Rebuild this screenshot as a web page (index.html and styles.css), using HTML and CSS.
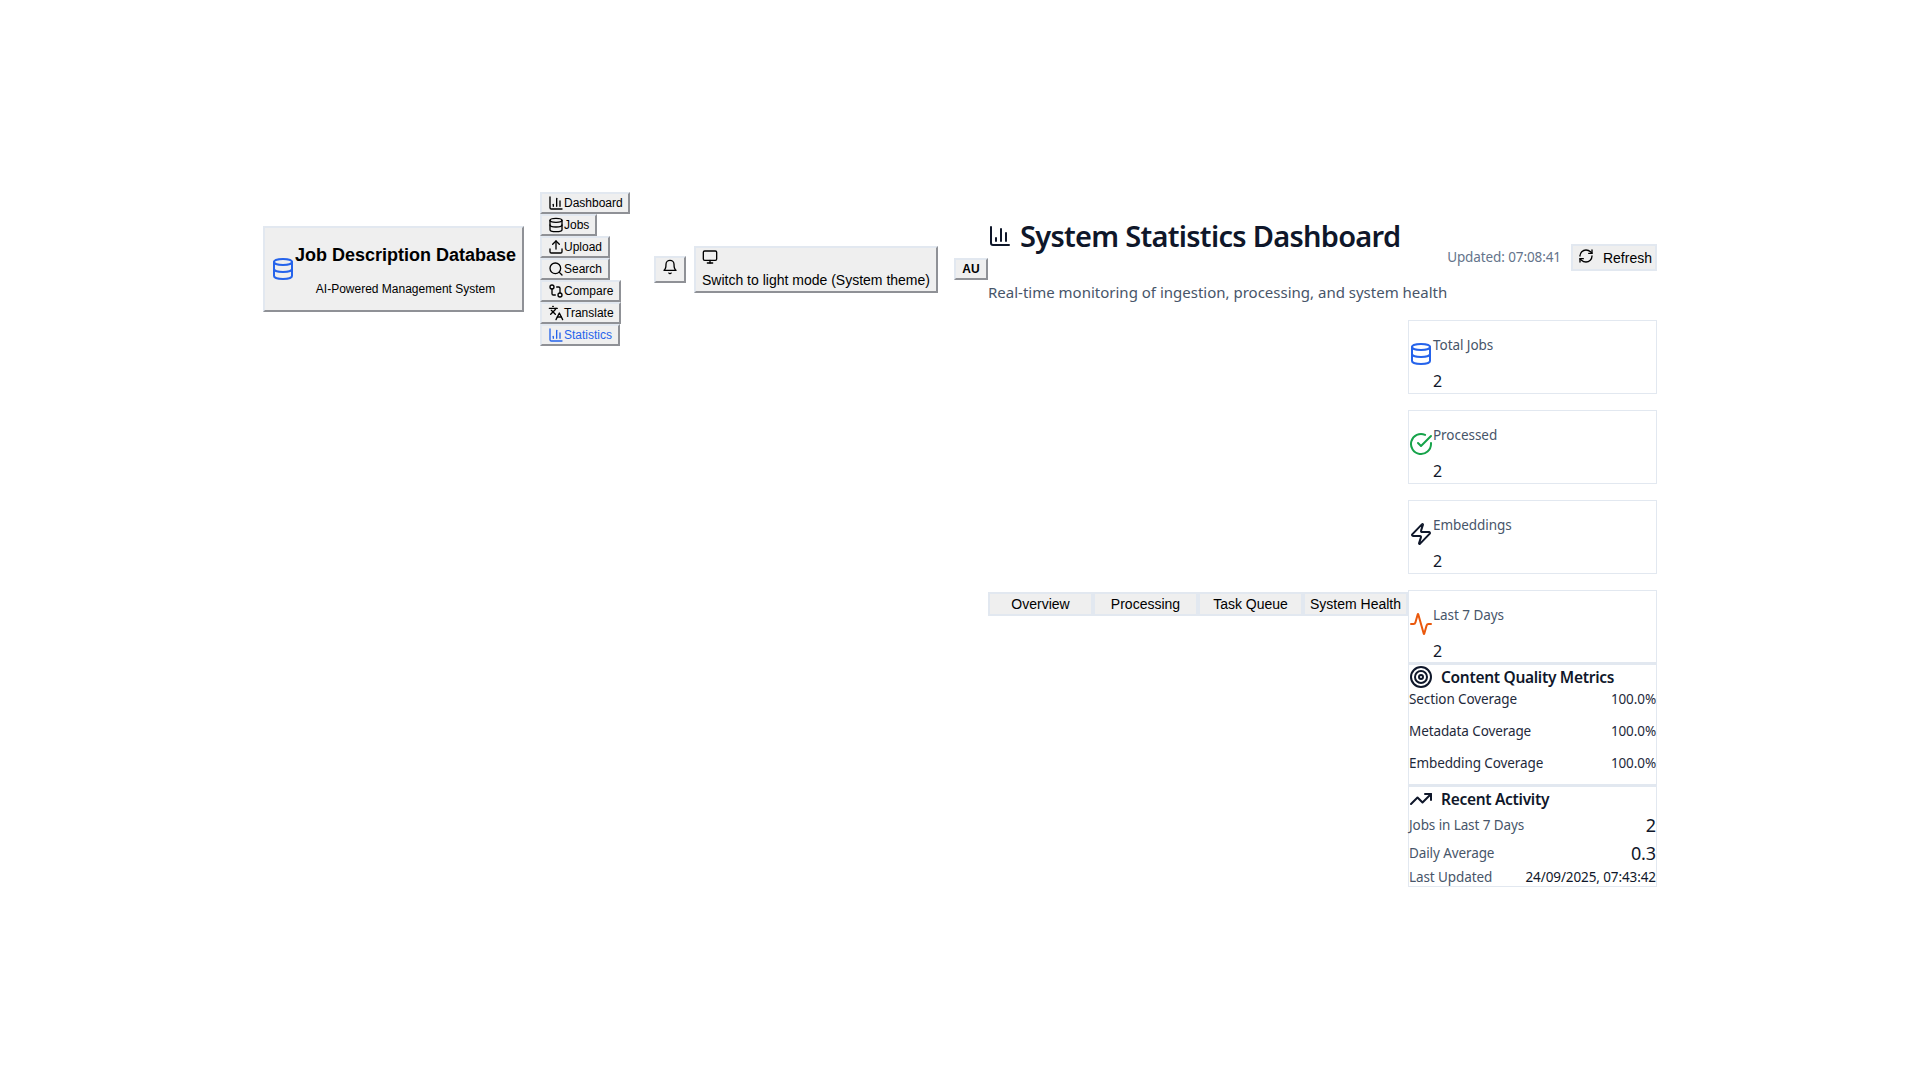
FILE: index.html

```html
<!DOCTYPE html>
<html lang="en">
<head>
    <meta charset="UTF-8">
    <title>System Statistics Dashboard</title>
    <link rel="stylesheet" href="styles.css">
</head>
<body>

<svg class="sprite" xmlns="http://www.w3.org/2000/svg">
    <symbol id="i-chart" viewBox="0 0 24 24"><path d="M3 3v16a2 2 0 0 0 2 2h16"/><path d="M18 17V9"/><path d="M13 17V5"/><path d="M8 17v-3"/></symbol>
    <symbol id="i-db" viewBox="0 0 24 24"><ellipse cx="12" cy="5" rx="9" ry="3"/><path d="M3 5V19A9 3 0 0 0 21 19V5"/><path d="M3 12A9 3 0 0 0 21 12"/></symbol>
    <symbol id="i-upload" viewBox="0 0 24 24"><path d="M21 15v4a2 2 0 0 1-2 2H5a2 2 0 0 1-2-2v-4"/><path d="M17 8l-5-5-5 5"/><path d="M12 3v12"/></symbol>
    <symbol id="i-search" viewBox="0 0 24 24"><circle cx="11" cy="11" r="8"/><path d="m21 21-4.3-4.3"/></symbol>
    <symbol id="i-compare" viewBox="0 0 24 24"><circle cx="18" cy="18" r="3"/><circle cx="6" cy="6" r="3"/><path d="M13 6h3a2 2 0 0 1 2 2v7"/><path d="M11 18H8a2 2 0 0 1-2-2V9"/></symbol>
    <symbol id="i-lang" viewBox="0 0 24 24"><path d="m5 8 6 6"/><path d="m4 14 6-6 2-3"/><path d="M2 5h12"/><path d="M7 2h1"/><path d="m22 22-5-10-5 10"/><path d="M14 18h6"/></symbol>
    <symbol id="i-bell" viewBox="0 0 24 24"><path d="M6 8a6 6 0 0 1 12 0c0 7 3 9 3 9H3s3-2 3-9"/><path d="M10.3 21a1.94 1.94 0 0 0 3.4 0"/></symbol>
    <symbol id="i-monitor" viewBox="0 0 24 24"><rect x="2" y="3" width="20" height="14" rx="2"/><path d="M8 21h8"/><path d="M12 17v4"/></symbol>
    <symbol id="i-refresh" viewBox="0 0 24 24"><path d="M3 12a9 9 0 0 1 9-9 9.75 9.75 0 0 1 6.74 2.74L21 8"/><path d="M21 3v5h-5"/><path d="M21 12a9 9 0 0 1-9 9 9.75 9.75 0 0 1-6.74-2.74L3 16"/><path d="M8 16H3v5"/></symbol>
    <symbol id="i-check" viewBox="0 0 24 24"><path d="M22 11.08V12a10 10 0 1 1-5.93-9.14"/><path d="M22 4 12 14.01l-3-3"/></symbol>
    <symbol id="i-zap" viewBox="0 0 24 24"><path d="M4 14a1 1 0 0 1-.78-1.63l9.9-10.2a.5.5 0 0 1 .86.46l-1.92 6.02A1 1 0 0 0 13 10h7a1 1 0 0 1 .78 1.63l-9.9 10.2a.5.5 0 0 1-.86-.46l1.92-6.02A1 1 0 0 0 11 14z"/></symbol>
    <symbol id="i-activity" viewBox="0 0 24 24"><path d="M22 12h-2.48a2 2 0 0 0-1.93 1.46l-2.35 8.36a.25.25 0 0 1-.48 0L9.24 2.18a.25.25 0 0 0-.48 0l-2.35 8.36A2 2 0 0 1 4.49 12H2"/></symbol>
    <symbol id="i-target" viewBox="0 0 24 24"><circle cx="12" cy="12" r="10"/><circle cx="12" cy="12" r="6"/><circle cx="12" cy="12" r="2"/></symbol>
    <symbol id="i-trend" viewBox="0 0 24 24"><path d="M22 7l-8.5 8.5-5-5L2 17"/><path d="M16 7h6v6"/></symbol>
</svg>

<div class="page">
    <header class="topbar">
        <button class="logo">
            <svg class="icon icon-24 blue"><use href="#i-db"/></svg>
            <span class="logo-text">
                <span class="logo-title">Job Description Database</span>
                <span class="logo-sub">AI-Powered Management System</span>
            </span>
        </button>

        <nav class="nav">
            <button class="nav-btn"><svg class="icon icon-16"><use href="#i-chart"/></svg>Dashboard</button>
            <button class="nav-btn"><svg class="icon icon-16"><use href="#i-db"/></svg>Jobs</button>
            <button class="nav-btn"><svg class="icon icon-16"><use href="#i-upload"/></svg>Upload</button>
            <button class="nav-btn"><svg class="icon icon-16"><use href="#i-search"/></svg>Search</button>
            <button class="nav-btn"><svg class="icon icon-16"><use href="#i-compare"/></svg>Compare</button>
            <button class="nav-btn"><svg class="icon icon-16"><use href="#i-lang"/></svg>Translate</button>
            <button class="nav-btn active"><svg class="icon icon-16"><use href="#i-chart"/></svg>Statistics</button>
        </nav>

        <button class="bell-btn"><svg class="icon icon-16"><use href="#i-bell"/></svg></button>
        <button class="theme-btn">
            <svg class="icon icon-16"><use href="#i-monitor"/></svg>
            <span>Switch to light mode (System theme)</span>
        </button>
        <button class="user-btn">AU</button>
    </header>

    <main class="main">
        <div class="main-head">
            <div class="head-text">
                <h1><svg class="icon icon-24"><use href="#i-chart"/></svg>System Statistics Dashboard</h1>
                <p class="subtitle">Real-time monitoring of ingestion, processing, and system health</p>
            </div>
            <div class="head-actions">
                <span class="updated">Updated: 07:08:41</span>
                <button class="refresh-btn"><svg class="icon icon-16"><use href="#i-refresh"/></svg>Refresh</button>
            </div>
        </div>

        <div class="content">
            <div class="tabs">
                <button class="tab">Overview</button>
                <button class="tab">Processing</button>
                <button class="tab">Task Queue</button>
                <button class="tab">System Health</button>
            </div>

            <div class="side">
                <div class="stat-card">
                    <svg class="icon icon-24 blue"><use href="#i-db"/></svg>
                    <div><div class="stat-label">Total Jobs</div><div class="stat-value">2</div></div>
                </div>
                <div class="stat-card">
                    <svg class="icon icon-24 green"><use href="#i-check"/></svg>
                    <div><div class="stat-label">Processed</div><div class="stat-value">2</div></div>
                </div>
                <div class="stat-card">
                    <svg class="icon icon-24"><use href="#i-zap"/></svg>
                    <div><div class="stat-label">Embeddings</div><div class="stat-value">2</div></div>
                </div>
                <div class="stat-card last">
                    <svg class="icon icon-24 orange"><use href="#i-activity"/></svg>
                    <div><div class="stat-label">Last 7 Days</div><div class="stat-value">2</div></div>
                </div>

                <section class="panel quality">
                    <h3><svg class="icon icon-24"><use href="#i-target"/></svg>Content Quality Metrics</h3>
                    <div class="q-row"><span>Section Coverage</span><span>100.0%</span></div>
                    <div class="q-row"><span>Metadata Coverage</span><span>100.0%</span></div>
                    <div class="q-row"><span>Embedding Coverage</span><span>100.0%</span></div>
                </section>

                <section class="panel activity">
                    <h3><svg class="icon icon-24"><use href="#i-trend"/></svg>Recent Activity</h3>
                    <div class="a-row"><span>Jobs in Last 7 Days</span><span class="big">2</span></div>
                    <div class="a-row"><span>Daily Average</span><span class="big">0.3</span></div>
                    <div class="a-row updated-row"><span>Last Updated</span><span class="date">24/09/2025, 07:43:42</span></div>
                </section>
            </div>
        </div>
    </main>
</div>

</body>
</html>
```

FILE: styles.css

```css
body {
    margin: 0;
    background: #fff;
    color: #0f172a;
    font-family: "Noto Sans", "Open Sans", sans-serif;
}
.sprite {
    display: none;
}
button {
    font-family: "Liberation Sans", Arial, sans-serif;
    color: #000;
    background: #efefef;
    border: 2px solid;
    border-color: #e2e8f0 #8f9196 #8f9196 #e2e8f0;
    padding: 0;
    margin: 0;
}
.icon {
    fill: none;
    stroke: currentColor;
    stroke-width: 2;
    stroke-linecap: round;
    stroke-linejoin: round;
    flex-shrink: 0;
}
.icon-16 { width: 16px; height: 16px; }
.icon-24 { width: 24px; height: 24px; }
.blue { color: #2563eb; }
.green { color: #16a34a; }
.orange { color: #ea580c; }

.page {
    width: 1394px;
    margin: 0 auto;
    padding-top: 192px;
    display: flex;
    align-items: flex-start;
}

/* top bar */
.topbar {
    display: flex;
    align-items: center;
    flex-shrink: 0;
}
.logo {
    display: flex;
    align-items: center;
    width: 261px;
    height: 86px;
    padding: 0 6px;
    margin-right: 16px;
}
.logo-text {
    display: flex;
    flex-direction: column;
    align-items: center;
    gap: 12px;
    margin-top: -1px;
    white-space: nowrap;
}
.logo-title {
    font-size: 18px;
    font-weight: bold;
    line-height: 28px;
}
.logo-sub {
    font-size: 12px;
    line-height: 16px;
}
.nav {
    display: flex;
    flex-direction: column;
    align-items: flex-start;
    width: 114px;
}
.nav-btn {
    display: flex;
    align-items: center;
    height: 22px;
    padding: 0 5.5px 0 6px;
    font-size: 12px;
}
.nav-btn.active {
    color: #2563eb;
}
.bell-btn {
    width: 32px;
    height: 27px;
    display: flex;
    align-items: center;
    justify-content: center;
    padding-bottom: 4px;
    margin-right: 8px;
}
.theme-btn {
    width: 244px;
    height: 47px;
    padding: 1px 5px 0 6px;
    font-size: 14px;
    line-height: 20px;
    text-align: left;
}
.theme-btn .icon,
.theme-btn span {
    display: block;
}
.theme-btn .icon {
    margin-bottom: 5px;
}
.user-btn {
    width: 34px;
    height: 22px;
    margin-left: 16px;
    font-size: 12px;
    font-weight: bold;
}

/* main column */
.main {
    flex: 1;
    min-width: 0;
    padding-top: 24px;
}
.main-head {
    display: flex;
    justify-content: space-between;
    align-items: center;
}
.head-text {
    flex: 1;
    min-width: 0;
}
h1 {
    display: flex;
    align-items: center;
    gap: 8px;
    margin: 0 0 24px;
    font-size: 29px;
    line-height: 40px;
    font-weight: 600;
    letter-spacing: -0.72px;
    white-space: nowrap;
}
.subtitle {
    margin: 0;
    font-size: 15px;
    line-height: 24px;
    color: #475569;
    white-space: nowrap;
}
.head-actions {
    display: flex;
    align-items: center;
    gap: 10px;
    margin-bottom: 6px;
    white-space: nowrap;
}
.updated {
    font-size: 13.5px;
    letter-spacing: -0.1px;
    color: #64748b;
}
.refresh-btn {
    display: flex;
    align-items: center;
    gap: 9px;
    height: 27px;
    padding: 1px 3px 0 5px;
    font-size: 14px;
    border-color: #e2e8f0;
}
.refresh-btn .icon {
    margin-top: -3px;
}
.content {
    display: flex;
    align-items: center;
    margin-top: 16px;
}
.tabs {
    display: flex;
    width: 420px;
    margin-top: 1px;
}
.tab {
    flex: 1;
    height: 24px;
    font-size: 14px;
    border-color: #e2e8f0;
}
.side {
    width: 249px;
    display: flex;
    flex-direction: column;
}
.stat-card {
    box-sizing: border-box;
    display: flex;
    height: 74px;
    margin-bottom: 16px;
    padding: 14px 0 0 0;
    border: 1px solid #e2e8f0;
}
.stat-card.last {
    height: 73px;
    margin-bottom: 0;
}
.stat-card .icon {
    margin-top: 7px;
}
.stat-label {
    font-size: 13.5px;
    line-height: 20px;
    letter-spacing: -0.05px;
    color: #475569;
}
.stat-value {
    margin-top: 15px;
    font-size: 16px;
    line-height: 22px;
}
.panel {
    border: 1px solid #e2e8f0;
    border-top-width: 2px;
    box-sizing: border-box;
}
h3 {
    display: flex;
    align-items: center;
    gap: 8px;
    margin: 0;
    font-size: 15.5px;
    font-weight: 600;
    line-height: 24px;
    letter-spacing: -0.3px;
}
.quality {
    height: 122px;
}
.activity {
    height: 102px;
}
.q-row,
.a-row {
    display: flex;
    justify-content: space-between;
    font-size: 13.5px;
    letter-spacing: -0.1px;
}
.q-row {
    height: 32px;
    line-height: 20px;
    color: #1e293b;
}
.a-row {
    align-items: center;
    color: #475569;
}
.a-row.updated-row {
    margin-top: 1px;
}
.a-row .big {
    font-size: 18px;
    color: #0f172a;
    line-height: 28px;
}
.a-row .date {
    color: #0f172a;
}
```
